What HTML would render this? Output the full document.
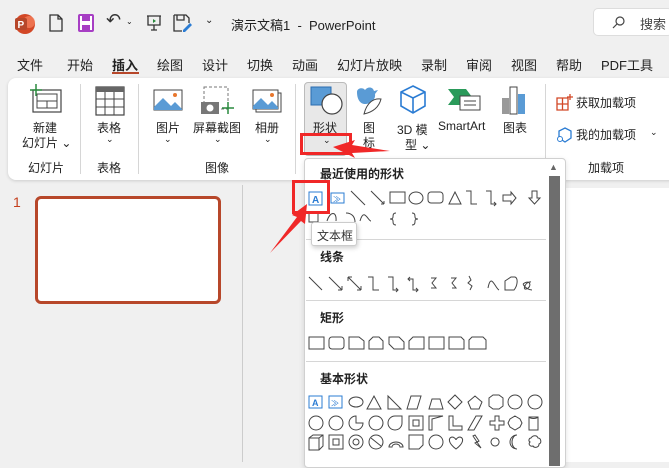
<!DOCTYPE html>
<html><head><meta charset="utf-8"><style>
*{margin:0;padding:0;box-sizing:border-box}
body{width:669px;height:462px;overflow:hidden;background:#f0f0f0;font-family:"Liberation Sans","Noto Sans CJK SC",sans-serif;color:#222;position:relative;font-size:12px}
.a{position:absolute;white-space:nowrap}
.t{font-size:13px}
.s{font-size:12px}
.hd{font-size:12px;font-weight:bold;color:#222}
.sep{position:absolute;background:#d6d6d6}
</style></head><body>
<!-- title bar -->
<svg class="a" style="left:14px;top:13px" width="22" height="22"><circle cx="11" cy="11" r="10" fill="#d24726"/><circle cx="15" cy="9" r="6" fill="#ff8f6b" opacity=".6"/><rect x="1" y="5" width="12" height="12" rx="2" fill="#b7472a"/><text x="3.5" y="15" font-size="10" fill="#fff" font-weight="bold" font-family="Liberation Sans">P</text></svg>
<svg class="a" style="left:48px;top:14px" width="16" height="18"><path d="M2 1h8l4 4v12H2z M10 1v4h4" fill="none" stroke="#333" stroke-width="1.3"/></svg>
<svg class="a" style="left:78px;top:14px" width="16" height="18"><rect x="1" y="1" width="14" height="16" rx="1" fill="#fff" stroke="#a73ec4" stroke-width="2"/><rect x="4" y="2" width="8" height="5" fill="#a73ec4"/><rect x="4" y="11" width="8" height="5" fill="#a73ec4"/></svg>
<div class="a" style="left:106px;top:10px;font-size:18px;color:#333">↶</div><div class="a" style="left:126px;top:17px;font-size:8px">⌄</div>
<svg class="a" style="left:146px;top:14px" width="16" height="18"><path d="M1 2h14M2 2v9h12V2M8 11v5M5 16h6" fill="none" stroke="#333" stroke-width="1.3"/><path d="M7 5l3 2-3 2z" fill="#2a8a3e"/></svg>
<svg class="a" style="left:173px;top:14px" width="20" height="18"><path d="M1 1h12l3 3v5M1 1v16h8M4 1v5h7V1" fill="none" stroke="#333" stroke-width="1.3"/><path d="M10 16l7-7 2 2-7 7h-2z" fill="#2b7cd3"/></svg>
<div class="a" style="left:205px;top:15px;font-size:10px">⌄</div>
<div class="a t" style="left:231px;top:15px">演示文稿1&nbsp; -&nbsp; PowerPoint</div>
<div class="a" style="left:593px;top:8px;width:80px;height:28px;background:#fff;border:1px solid #ddd;border-radius:5px"></div>
<svg class="a" style="left:612px;top:16px" width="13" height="13"><circle cx="8" cy="5" r="4" fill="none" stroke="#444" stroke-width="1.2"/><path d="M5 8L1 12" stroke="#444" stroke-width="1.2"/></svg>
<div class="a t" style="left:640px;top:14px;color:#444">搜索</div>
<!-- tabs -->
<div class="a t" style="left:17px;top:55px">文件</div>
<div class="a t" style="left:67px;top:55px">开始</div>
<div class="a t" style="left:112px;top:55px;font-weight:bold">插入</div>
<div class="a" style="left:112px;top:72px;width:27px;height:2px;background:#b7472a"></div>
<div class="a t" style="left:157px;top:55px">绘图</div>
<div class="a t" style="left:202px;top:55px">设计</div>
<div class="a t" style="left:247px;top:55px">切换</div>
<div class="a t" style="left:292px;top:55px">动画</div>
<div class="a t" style="left:337px;top:55px">幻灯片放映</div>
<div class="a t" style="left:421px;top:55px">录制</div>
<div class="a t" style="left:466px;top:55px">审阅</div>
<div class="a t" style="left:511px;top:55px">视图</div>
<div class="a t" style="left:556px;top:55px">帮助</div>
<div class="a t" style="left:601px;top:55px">PDF工具</div>
<!-- ribbon -->
<div class="a" style="left:8px;top:78px;width:680px;height:102px;background:#fff;border-radius:8px;box-shadow:0 1px 3px rgba(0,0,0,.15)"></div>
<svg class="a" style="left:29px;top:84px" width="34" height="30"><rect x="4" y="6" width="28" height="22" fill="#fff" stroke="#444" stroke-width="1.2"/><path d="M8 10h20v14H8zM8 17h20M18 17v7" fill="none" stroke="#444"/><path d="M4 0v12M-2 6h12" stroke="#2a8a3e" stroke-width="1.5" transform="translate(3,0)"/></svg>
<div class="a s" style="left:33px;top:119px">新建</div>
<div class="a s" style="left:22px;top:134px">幻灯片 ⌄</div>
<div class="a s" style="left:28px;top:159px">幻灯片</div>
<div class="sep" style="left:80px;top:84px;width:1px;height:90px"></div>
<svg class="a" style="left:95px;top:86px" width="30" height="30"><rect x="1" y="1" width="28" height="28" fill="#fff" stroke="#444" stroke-width="1.2"/><rect x="1" y="1" width="28" height="5" fill="#666"/><path d="M1 13h28M1 21h28M10 6v23M19 6v23" stroke="#444"/></svg>
<div class="a s" style="left:97px;top:119px">表格</div><div class="a" style="left:106px;top:134px;font-size:9px">⌄</div>
<div class="a s" style="left:97px;top:159px">表格</div>
<div class="sep" style="left:138px;top:84px;width:1px;height:90px"></div>
<svg class="a" style="left:153px;top:89px" width="30" height="22"><rect x="1" y="1" width="28" height="20" fill="#fff" stroke="#444"/><path d="M1 18l9-9 8 8 4-4 7 7v1H1z" fill="#5a9bd5"/><circle cx="22" cy="6" r="2" fill="#e8772e"/></svg>
<div class="a s" style="left:156px;top:119px">图片</div><div class="a" style="left:164px;top:134px;font-size:9px">⌄</div>
<svg class="a" style="left:200px;top:86px" width="36" height="30"><rect x="4" y="1" width="24" height="22" fill="none" stroke="#777" stroke-dasharray="3 2"/><rect x="1" y="16" width="18" height="12" fill="#777"/><circle cx="10" cy="22" r="3.5" fill="#fff"/><path d="M28 16v12M22 22h12" stroke="#2a8a3e" stroke-width="1.5"/></svg>
<div class="a s" style="left:193px;top:119px">屏幕截图</div><div class="a" style="left:214px;top:134px;font-size:9px">⌄</div>
<svg class="a" style="left:252px;top:89px" width="30" height="24"><rect x="4" y="4" width="25" height="19" fill="#fff" stroke="#444"/><rect x="1" y="1" width="25" height="19" fill="#fff" stroke="#444"/><path d="M1 17l8-8 7 7 4-4 6 6v2H1z" fill="#5a9bd5"/><circle cx="20" cy="6" r="2" fill="#e8772e"/></svg>
<div class="a s" style="left:255px;top:119px">相册</div><div class="a" style="left:264px;top:134px;font-size:9px">⌄</div>
<div class="a s" style="left:205px;top:159px">图像</div>
<div class="sep" style="left:295px;top:84px;width:1px;height:90px"></div>
<div class="a" style="left:304px;top:82px;width:43px;height:74px;background:#e8e8e8;border:1px solid #bbb;border-radius:4px"></div>
<svg class="a" style="left:310px;top:86px" width="34" height="30"><rect x="1" y="1" width="20" height="18" fill="#5a9bd5" stroke="#2b6cb0"/><circle cx="22" cy="18" r="10" fill="#fff" stroke="#444" stroke-width="1.2"/></svg>
<div class="a s" style="left:313px;top:119px">形状</div><div class="a" style="left:323px;top:135px;font-size:9px">⌄</div>
<svg class="a" style="left:354px;top:86px" width="30" height="30"><path d="M3 6c0-4 6-5 8-2 3-4 8-3 9 1l4-1-3 4c1 6-5 10-10 10-5 0-8-5-8-12z" fill="#5a9bd5"/><path d="M10 28c3-12 10-16 17-15-2 8-8 13-17 15z" fill="#fff" stroke="#444"/></svg>
<div class="a s" style="left:363px;top:119px">图</div><div class="a s" style="left:363px;top:134px">标</div>
<svg class="a" style="left:398px;top:84px" width="30" height="32"><path d="M15 2l12 6v14l-12 7-12-7V8z M3 8l12 6 12-6 M15 14v15" fill="none" stroke="#2b7cd3" stroke-width="1.6"/></svg>
<div class="a s" style="left:397px;top:121px">3D 模</div><div class="a s" style="left:405px;top:136px">型 ⌄</div>
<svg class="a" style="left:447px;top:86px" width="36" height="28"><path d="M1 3h18l6 8-6 8H1l6-8z" fill="#2a9a5a"/><rect x="13" y="10" width="20" height="14" fill="#fff" stroke="#444"/><path d="M17 15h12M17 19h12" stroke="#444"/></svg>
<div class="a s" style="left:438px;top:119px">SmartArt</div>
<svg class="a" style="left:501px;top:84px" width="26" height="32"><rect x="1" y="14" width="7" height="16" fill="#999"/><rect x="9" y="3" width="7" height="27" fill="#fff" stroke="#444"/><rect x="17" y="10" width="7" height="20" fill="#5a9bd5"/></svg>
<div class="a s" style="left:503px;top:119px">图表</div>
<div class="sep" style="left:545px;top:84px;width:1px;height:90px"></div>
<svg class="a" style="left:556px;top:93px" width="18" height="18"><path d="M1 5h11v12H1zM1 11h11M6.5 5v12M14 1v6M11 4h6" fill="none" stroke="#d24726" stroke-width="1.3"/></svg>
<div class="a s" style="left:576px;top:94px">获取加载项</div>
<svg class="a" style="left:556px;top:126px" width="18" height="18"><path d="M9 2l6 3v7l-6 4-6-4V5z" fill="none" stroke="#2b7cd3" stroke-width="1.3"/><circle cx="4" cy="13" r="2.5" fill="#fff" stroke="#2b7cd3"/></svg>
<div class="a s" style="left:576px;top:126px">我的加载项</div><div class="a" style="left:650px;top:127px;font-size:9px">⌄</div>
<div class="a s" style="left:588px;top:159px">加载项</div>
<!-- body -->
<div class="sep" style="left:242px;top:185px;width:1px;height:277px;background:#ccc"></div>
<div class="a" style="left:560px;top:188px;width:120px;height:274px;background:#fff"></div>
<div class="a" style="left:13px;top:194px;font-size:14px;color:#c43e1c">1</div>
<div class="a" style="left:35px;top:196px;width:186px;height:108px;border:3px solid #b7472a;border-radius:6px;background:#fff"></div>
<!-- dropdown -->
<div class="a" style="left:304px;top:158px;width:262px;height:310px;background:#fff;border:1px solid #d0d0d0;border-radius:4px;box-shadow:0 2px 6px rgba(0,0,0,.12)"></div>
<div class="a" style="left:549px;top:176px;width:11px;height:290px;background:#6e6e6e"></div>
<div class="a" style="left:549px;top:162px;font-size:9px;color:#666">▲</div>
<div class="a hd" style="left:320px;top:165px">最近使用的形状</div>
<div class="sep" style="left:306px;top:239px;width:240px;height:1px"></div>
<div class="a hd" style="left:320px;top:248px">线条</div>
<div class="sep" style="left:306px;top:300px;width:240px;height:1px"></div>
<div class="a hd" style="left:320px;top:309px">矩形</div>
<div class="sep" style="left:306px;top:361px;width:240px;height:1px"></div>
<div class="a hd" style="left:320px;top:370px">基本形状</div>
<svg class="a" style="left:306px;top:185px" width="244" height="277" fill="none" stroke="#444" stroke-width="1">
<!-- recent row1 y 5-22 -->
<rect x="3" y="7" width="13" height="13" stroke="#2b7cd3"/><text x="6" y="18" font-size="10" fill="#2b7cd3" stroke="none" font-family="Liberation Sans" font-weight="bold">A</text>
<rect x="25" y="8" width="13" height="10" stroke="#2b7cd3"/><text x="27" y="17" font-size="8" fill="#2b7cd3" stroke="none">≫</text>
<path d="M45 6l14 14M65 6l13 13M78 19v-3M78 19h-3"/>
<rect x="84" y="7" width="15" height="11"/><ellipse cx="110" cy="13" rx="7" ry="6"/><rect x="122" y="7" width="15" height="11" rx="3"/>
<path d="M143 19l6-12 6 12z"/><path d="M160 6h5v13h6M180 6h5v13h5M188 17l2 2-2 2"/>
<path d="M197 10h8v-3l5 6-5 6v-3h-8z"/><path d="M226 6h5v7h3l-5.5 6-5.5-6h3z"/>
<!-- row2 -->
<rect x="3" y="27" width="9" height="10"/><path d="M21 36c3-10 10-10 9 0M40 28c6 0 9 4 9 9M54 36c4-14 8 0 11 0M90 28c-3 0-3 2-3 4s-2 2-3 2c1 0 3 0 3 2s0 4 3 4M106 28c3 0 3 2 3 4s2 2 3 2c-1 0-3 0-3 2s0 4-3 4"/>
<!-- lines y ~95 -->
<g transform="translate(0,89)">
<path d="M3 3l13 13M23 3l13 13M36 16v-4M36 16h-4M42 3l13 13M42 3v4M42 3h4M55 16v-4M55 16h-4M62 3h5v13h6M82 3h5v13h5M90 14l2 2-2 2M104 3l-2 2 2 2M102 5h5v11h5M110 14l2 2-2 2M125 4h5l-4 5 4 5h-5M145 4h5l-4 5 4 5h-4M163 2l2 4-3 3 4 3-2 4M182 14c3-16 7 0 11 2M199 16v-9l6-4h4c3 1 3 8-1 13zM217 10c8-6 9 4 3 5-4 1 0-8 5-7M217 10c2 4 6 6 9 6"/>
</g>
<!-- rects y ~150 -->
<g transform="translate(0,151)">
<rect x="3" y="1" width="15" height="12"/><rect x="23" y="1" width="15" height="12" rx="3"/><path d="M43 1h10l5 4v8H43zM63 13v-8l4-4h6l4 4v8zM83 1h10l5 5v7h-10l-5-5zM103 13V5l4-4h11v12zM123 1h15v12h-15zM143 1h12l3 3v9h-15zM163 4l3-3h11l3 3v9h-17z"/>
</g>
<!-- basic shapes -->
<g transform="translate(0,209)">
<rect x="3" y="2" width="13" height="12" stroke="#2b7cd3"/><text x="6" y="12" font-size="9" fill="#2b7cd3" stroke="none" font-weight="bold">A</text>
<rect x="23" y="2" width="13" height="12" stroke="#2b7cd3"/><text x="25" y="12" font-size="8" fill="#2b7cd3" stroke="none">≫</text>
<ellipse cx="50" cy="8" rx="7" ry="5"/><path d="M61 15l7-13 7 13zM82 15V2l13 13zM101 15l4-13h10l-4 13zM123 15l3-10h8l3 10zM142 8l7-7 7 7-7 7zM162 8l7-6 7 6-3 7h-8zM183 4l4-3h6l4 3v8l-4 3h-6l-4-3z"/>
<circle cx="209" cy="8" r="7"/><circle cx="229" cy="8" r="7"/>
<circle cx="10" cy="29" r="7"/><circle cx="30" cy="29" r="7"/><path d="M57 29a7 7 0 1 1-7-7v7z"/><circle cx="70" cy="29" r="7"/><path d="M96 22v7a7 7 0 1 1-7-7z"/><rect x="103" y="22" width="14" height="14"/><rect x="107" y="26" width="6" height="6"/><path d="M123 36V22h14l-11 3v11zM143 22h4v10h9v4h-13zM162 36l8-14h6l-8 14zM189 22h4v5h5v4h-5v5h-4v-5h-5v-4h5zM209 22l5 3 2 4-2 4-5 3-5-3-2-4 2-4z"/><path d="M223 23h9v13h-9zM223 23c2 2 7 2 9 0"/>
<path d="M3 44l4-3h10v11l-4 4H3zM3 44h10v12M13 44l4-3"/><rect x="23" y="41" width="14" height="14"/><rect x="27" y="45" width="6" height="6"/><circle cx="50" cy="48" r="7"/><circle cx="50" cy="48" r="3"/><circle cx="70" cy="48" r="7"/><path d="M65 44l10 8"/><path d="M83 53a7 5 0 0 1 14 0h-3a4 3 0 0 0-8 0z"/><path d="M103 41h14v10l-4 4h-10z"/><circle cx="130" cy="48" r="7"/><path d="M150 55c-8-6-8-11-4-12 2 0 4 2 4 3 0-1 2-3 4-3 4 1 4 6-4 12zM169 41l4 6-2 1 4 6-6-5 2-1-4-6zM189 44a4 4 0 1 0 .1 0"/><path d="M211 41a7 7 0 1 0 0 14 5 7 0 0 1 0-14zM225 44c2-3 6-3 7 0 3 0 4 5 1 6 0 4-5 4-6 2-3 1-5-2-3-4-2-1-1-4 1-4z"/>
</g>
</svg>
<!-- tooltip -->
<div class="a" style="left:311px;top:222px;width:46px;height:24px;background:#fff;border:1px solid #ccc;border-radius:3px;box-shadow:1px 2px 5px rgba(0,0,0,.2);font-size:12px;padding:4px 0 0 5px;color:#333">文本框</div>
<!-- red annotations -->
<div class="a" style="left:300px;top:133px;width:52px;height:22px;border:3px solid #f02828"></div>
<div class="a" style="left:292px;top:180px;width:38px;height:34px;border:3px solid #f02828"></div>
<svg class="a" style="left:0;top:0" width="669" height="462"><path d="M333 147l22-7-3 5 38 6-38 2 3 5z" fill="#f02828"/><path d="M307 204l-2 20-4-3-31 32 27-36-5-2z" fill="#f02828"/></svg>
</body></html>
